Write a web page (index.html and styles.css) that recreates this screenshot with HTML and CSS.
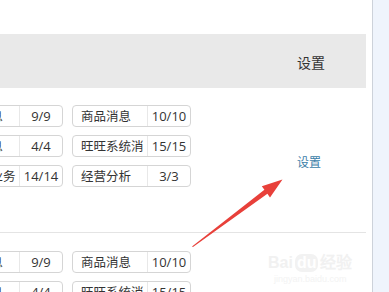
FILE: index.html
```html
<!DOCTYPE html>
<html lang="zh-CN">
<head>
<meta charset="utf-8">
<link rel="stylesheet" href="styles.css">
</head>
<body>
<div class="page">
  <div class="main">
    <div class="header">
      <div class="header-fill"></div>
      <div class="set-col"><span class="header-title">设置</span></div>
    </div>
    <div class="section first">
      <div class="grid">
        <div class="row">
          <div class="box"><span class="name">交易消息</span><span class="count">9/9</span></div>
          <div class="box"><span class="name">商品消息</span><span class="count">10/10</span></div>
        </div>
        <div class="row">
          <div class="box"><span class="name">退款消息</span><span class="count">4/4</span></div>
          <div class="box"><span class="name">旺旺系统消</span><span class="count">15/15</span></div>
        </div>
        <div class="row">
          <div class="box"><span class="name">新零售业务</span><span class="count">14/14</span></div>
          <div class="box"><span class="name">经营分析</span><span class="count">3/3</span></div>
        </div>
      </div>
      <div class="set-col link-col"><a class="set-link">设置</a></div>
    </div>
    <div class="section second">
      <div class="grid">
        <div class="row">
          <div class="box"><span class="name">交易消息</span><span class="count">9/9</span></div>
          <div class="box"><span class="name">商品消息</span><span class="count">10/10</span></div>
        </div>
        <div class="row">
          <div class="box"><span class="name">退款消息</span><span class="count">4/4</span></div>
          <div class="box"><span class="name">旺旺系统消</span><span class="count">15/15</span></div>
        </div>
      </div>
    </div>
  </div>
  <div class="gutter"></div>
</div>
<div class="watermark">
  <div class="wm-logo">Bai<span class="wm-du">du</span>经验</div>
  <div class="wm-url">jingyan.baidu.com</div>
</div>
<svg class="arrow" width="389" height="292" viewBox="0 0 389 292">
  <polygon points="192,246.5 264.4,189.8 261.8,186.2 282.5,179.5 270,197.4 267.4,193.8 193,247" fill="#e8403a"/>
</svg>
</body>
</html>
```

FILE: styles.css
```css
html, body {
  margin: 0;
  padding: 0;
  background: #ffffff;
}
body {
  width: 389px;
  height: 292px;
  overflow: hidden;
  position: relative;
  font-family: "Noto Sans CJK SC", "Noto Sans", sans-serif;
  color: #333333;
}
.page {
  display: flex;
  width: 389px;
  height: 292px;
}
.main {
  width: 372px;
  padding-top: 34px;
  box-sizing: border-box;
  overflow: hidden;
}
.gutter {
  width: 16px;
  border-left: 1px solid #cdd2da;
  background: #eff4fc;
}
.header {
  width: 366px;
  height: 54px;
  background: #e9e9e9;
  display: flex;
  align-items: center;
}
.header-fill {
  flex: 1;
}
.set-col {
  width: 69px;
  flex: none;
}
.header-title {
  font-size: 14px;
  color: #333333;
  line-height: 1;
}
.section {
  width: 366px;
  display: flex;
}
.section.first {
  height: 145px;
  border-bottom: 1px solid #e4e4e4;
  box-sizing: border-box;
  padding-top: 17px;
}
.section.second {
  padding-top: 18px;
}
.grid {
  flex: 1;
  display: flex;
  flex-direction: column;
  gap: 8px;
  margin-left: -56px;
  align-self: flex-start;
}
.row {
  display: flex;
  gap: 9px;
}
.box {
  width: 119px;
  height: 22px;
  box-sizing: border-box;
  border: 1px solid #d5d5d5;
  border-radius: 4px;
  display: flex;
  align-items: center;
  font-size: 12.5px;
  line-height: 20px;
}
.name {
  width: 74px;
  box-sizing: border-box;
  padding-left: 8px;
  white-space: nowrap;
  overflow: hidden;
  color: #333333;
}
.count {
  flex: 1;
  height: 20px;
  border-left: 1px solid #e8e8e8;
  text-align: center;
  color: #333333;
  font-family: "Open Sans", "Noto Sans", sans-serif;
  font-size: 13px;
}
.link-col {
  align-self: center;
  margin-top: -17px;
}
.set-link {
  font-size: 12px;
  color: #3b7ea8;
  line-height: 1;
}
.arrow {
  position: absolute;
  left: 0;
  top: 0;
  pointer-events: none;
}
.watermark {
  position: absolute;
  left: 268px;
  top: 254px;
  color: #f1f1f1;
  text-align: center;
  white-space: nowrap;
  font-family: "Liberation Sans", sans-serif;
}
.wm-logo {
  font-size: 16px;
  font-weight: bold;
  line-height: 18px;
}
.wm-du {
  display: inline-block;
  background: #f2f2f2;
  color: #ffffff;
  border-radius: 7px;
  padding: 0 2px;
  margin: 0 2px;
}
.wm-url {
  font-size: 9px;
  line-height: 14px;
  color: #f3f3f3;
}
```
